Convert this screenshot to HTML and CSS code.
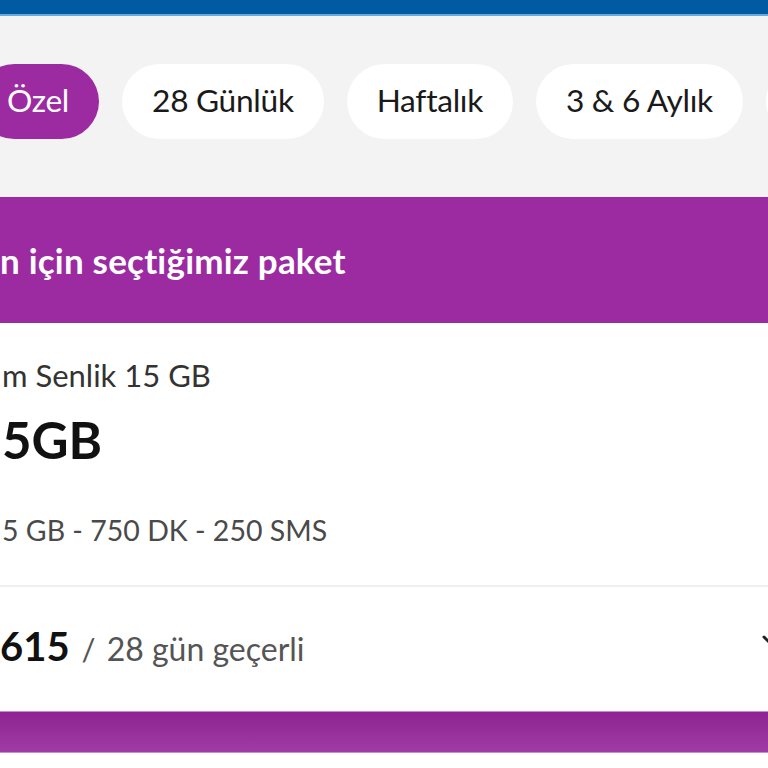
FILE: index.html
```html
<!DOCTYPE html>
<html lang="tr">
<head>
<meta charset="utf-8">
<title>Paketler</title>
<link rel="stylesheet" href="styles.css">
</head>
<body>
<div class="topbar"></div>
<nav class="tabs">
  <div class="chip-row">
    <span class="chip chip-active">Özel</span>
    <span class="chip">28 Günlük</span>
    <span class="chip">Haftalık</span>
    <span class="chip">3 &amp; 6 Aylık</span>
    <span class="chip chip-more" aria-label="Yıllık"></span>
  </div>
</nav>
<header class="banner">
  <h2 class="banner-title">n için seçtiğimiz paket</h2>
</header>
<section class="card">
  <div class="info">
    <p class="name">m Senlik 15 GB</p>
    <p class="big">5GB</p>
    <p class="detail">5 GB - 750 DK - 250 SMS</p>
  </div>
  <div class="price-row">
    <p class="price"><b class="amount">615</b><span class="slash">/</span><span class="period">28 gün geçerli</span></p>
    <svg class="chevron" width="24" height="16" viewBox="0 0 24 16"><path d="M2 3 L12 13 L22 3" fill="none" stroke="#222" stroke-width="3" stroke-linecap="round" stroke-linejoin="round"/></svg>
  </div>
</section>
<div class="bottom-bar"></div>
<div class="rest"></div>
</body>
</html>
```
FILE: styles.css
```css
* { box-sizing: border-box; }
html, body { margin: 0; padding: 0; }
body {
  width: 768px;
  height: 768px;
  overflow: hidden;
  background: #ffffff;
  font-family: "Lato", "Open Sans", sans-serif;
}
.topbar {
  height: 16px;
  background: #015ba2;
  border-bottom: 2px solid #6aa9dc;
}
.tabs {
  background: #f3f3f3;
  height: 181px;
  padding-top: 48px;
  overflow: hidden;
}
.chip-row {
  display: flex;
  gap: 23px;
  margin-left: -23px;
  white-space: nowrap;
}
.chip {
  flex: none;
  height: 75px;
  line-height: 73px;
  padding: 0 30px;
  border-radius: 38px;
  background: #ffffff;
  color: #1a1a1a;
  font-size: 31.7px;
  letter-spacing: -0.3px;
}
.chip-active {
  background: #9c2aa0;
  color: #ffffff;
}
.chip-more {
  width: 120px;
}
.banner {
  height: 126px;
  background: #9c2aa0;
  display: flex;
  align-items: center;
}
.banner-title {
  margin: 0;
  color: #ffffff;
  font-size: 35px;
  font-weight: 700;
  letter-spacing: 0.2px;
}
.card {
  background: #ffffff;
}
.info {
  padding: 32px 0 35px 2px;
  border-bottom: 2px solid #efefef;
}
.name {
  margin: 0;
  line-height: 40px;
  font-size: 31px;
  color: #333333;
}
.big {
  margin: 15px 0 0;
  line-height: 60px;
  font-size: 51px;
  font-weight: 700;
  color: #111111;
}
.detail {
  margin: 40px 0 0;
  line-height: 40px;
  font-size: 28.5px;
  color: #4a4a4a;
}
.price-row {
  height: 124px;
  display: flex;
  align-items: center;
  justify-content: space-between;
  padding-bottom: 6px;
}
.price {
  margin: 0;
  display: flex;
  align-items: baseline;
  color: #555555;
}
.amount {
  font-size: 40px;
  font-weight: 700;
  color: #111111;
}
.slash {
  font-size: 31px;
  margin: 0 11px 0 12px;
}
.period {
  font-size: 32px;
}
.chevron {
  margin-right: -18px;
  margin-bottom: 8px;
}
.bottom-bar {
  height: 42px;
  background: linear-gradient(#8e2491, #a03ba6);
  border-top: 1px solid #c58ac8;
  border-bottom: 1px solid #c58ac8;
}
.rest {
  height: 40px;
  background: #ffffff;
}
```
